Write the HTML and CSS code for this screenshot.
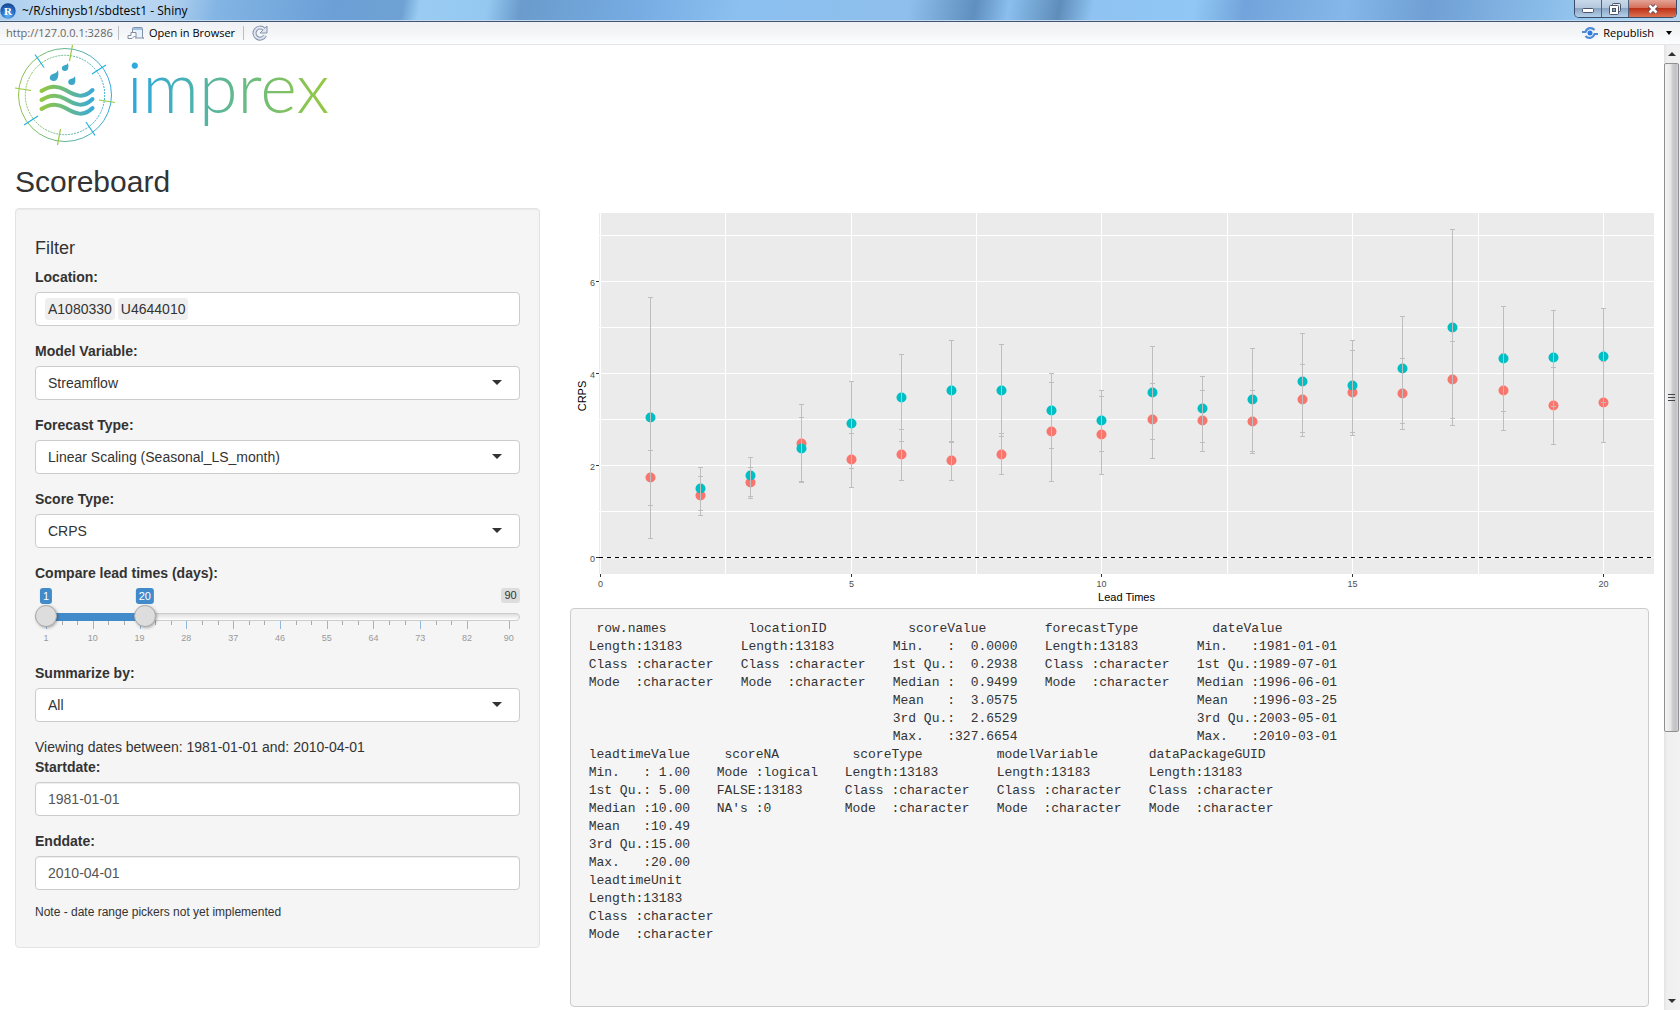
FILE: index.html
```html
<!DOCTYPE html>
<html lang="en">
<head>
<meta charset="utf-8">
<title>~/R/shinysb1/sbdtest1 - Shiny</title>
<link rel="stylesheet" href="styles.css">
</head>
<body>
<header class="titlebar">
  <svg class="app-icon" width="16" height="16" viewBox="0 0 16 16" aria-hidden="true">
    <defs><radialGradient id="ball" cx=".5" cy=".8" r=".8"><stop offset="0" stop-color="#5fb4f2"/><stop offset=".6" stop-color="#2468c0"/><stop offset="1" stop-color="#16408c"/></radialGradient></defs>
    <circle cx="8" cy="8" r="7.7" fill="url(#ball)"/>
    <text x="8" y="12" text-anchor="middle" class="app-letter">R</text>
  </svg>
  <span class="window-title">~/R/shinysb1/sbdtest1 - Shiny</span>
  <div class="window-buttons">
    <button class="win-btn" type="button" aria-label="Minimize"><svg width="14" height="14" viewBox="0 0 14 14"><rect x="1.5" y="6.500" width="11" height="4" rx="1" fill="#fff" stroke="#4a5568"/></svg></button>
    <button class="win-btn" type="button" aria-label="Restore"><svg width="14" height="14" viewBox="0 0 14 14"><rect x="4.500" y="1.500" width="8" height="8" rx="1" fill="#e8edf3" stroke="#4a5568"/><rect x="1.500" y="3.500" width="9" height="9" rx="1" fill="#fff" stroke="#4a5568"/><rect x="4.500" y="6.500" width="3" height="3" fill="#8fa3ba" stroke="#4a5568"/></svg></button>
    <button class="win-btn win-close" type="button" aria-label="Close"><svg width="14" height="14" viewBox="0 0 14 14"><path d="M3.500 3.500l7 7M10.500 3.500l-7 7" stroke="#5b4a55" stroke-width="4.500"/><path d="M3.500 3.500l7 7M10.500 3.500l-7 7" stroke="#fff" stroke-width="2.500"/></svg></button>
  </div>
</header>
<nav class="toolbar">
  <span class="url">http://127.0.0.1:3286</span>
  <span class="divider"></span>
  <button class="tool open" type="button">
    <svg width="18" height="14" viewBox="0 0 18 14" aria-hidden="true"><path d="M5.500 6V2.500a1 1 0 0 1 1-1h8a1 1 0 0 1 1 1v9a1 1 0 0 0 1.500.500H8" fill="#e9f1fa" stroke="#8292a8"/><path d="M6 3h9" stroke="#9fc0e2" stroke-width="2"/><path d="M1 12.500V9.500h3V6.500l5 0v5l-1.500-1.500L5 12.500z" fill="#fff" stroke="#7f8ea5"/></svg>
    <span>Open in Browser</span>
  </button>
  <span class="divider"></span>
  <button class="tool reload" type="button" aria-label="Reload">
    <svg width="16" height="16" viewBox="0 0 16 16"><path d="M13 10.500A5.500 5.500 0 1 1 12 4.300" fill="none" stroke="#8592aa" stroke-width="4"/><path d="M15 1v7H8z" fill="#dfe6f2" stroke="#8592aa"/><path d="M13 10.500A5.500 5.500 0 1 1 12 4.300" fill="none" stroke="#dfe6f2" stroke-width="2"/></svg>
  </button>
  <button class="tool republish" type="button">
    <svg width="18" height="14" viewBox="0 0 18 14" aria-hidden="true"><circle cx="9" cy="7" r="2.500" fill="#2f7be0"/><path d="M1 6h3.500C6 1.500 11 1 13.500 4M17 8h-3.500C12 12.500 7 13 4.500 10" fill="none" stroke="#4f8cd8" stroke-width="2.200"/></svg>
    <span>Republish</span>
    <span class="caret"></span>
  </button>
</nav>
<div class="viewport">
  <main class="page">
    <svg class="logo" width="320" height="100" viewBox="0 0 320 100" role="img" aria-label="imprex">
      <defs>
        <linearGradient id="ring" gradientUnits="userSpaceOnUse" x1="4" y1="0" x2="96" y2="0"><stop offset="0" stop-color="#8cc34b"/><stop offset="1" stop-color="#36a9dc"/></linearGradient>
        <linearGradient id="wave" gradientUnits="userSpaceOnUse" x1="25" y1="0" x2="80" y2="0"><stop offset="0" stop-color="#94c83d"/><stop offset="1" stop-color="#36a9dc"/></linearGradient>
        <linearGradient id="word" gradientUnits="userSpaceOnUse" x1="116" y1="0" x2="316" y2="0"><stop offset="0" stop-color="#2ca8e0"/><stop offset="1" stop-color="#97c93d"/></linearGradient>
      </defs>
      <circle cx="50" cy="50" r="46.500" fill="none" stroke="url(#ring)"/>
      <circle cx="50" cy="50" r="39.700" fill="none" stroke="url(#ring)" stroke-dasharray="2 1"/>
      <g stroke="#97c93d" stroke-width="1.200"><path d="M57.500 0l-3 16M0 43l16 2.500M84 55l16 2.500M45.500 84l-3 16"/></g>
      <g stroke="#1fb1e6" stroke-width="1.200"><path d="M20 9.500l9 13M91 20l-14 9M9 80l14-9M71 77l9 13.500"/></g>
      <g fill="none" stroke="url(#wave)" stroke-width="4" stroke-linecap="round"><path d="M26.500 46c6-4 14-7 24-1s18 9 27 0M26.500 55c6-4 14-7 24-1s18 9 27 0M26.500 64c6-4 14-7 24-1s18 9 27 0"/></g>
      <g fill="#3da6c9"><path d="M43 25c1 5 0 11-4 11-6 0-5-6-1-7 3-1 4-2 5-4z"/><path d="M53 18c1 5 0 8-3 8-4 0-4-5-1-5.500 2-.500 3-1 4-2.500z"/><path d="M60 31c1 6 0 9-3 9-5 0-4.500-5.500-1.500-6 2.500-.500 3.500-1 4.500-3z"/></g>
      <text class="wordmark" x="112" y="68" fill="url(#word)">imprex</text>
    </svg>
    <h2 class="heading">Scoreboard</h2>
    <div class="row">
      <section class="side">
        <form class="well">
          <h4 class="well-title">Filter</h4>
          <div class="field">
            <label for="location">Location:</label>
            <div class="control chips"><span class="chip">A1080330</span><span class="chip">U4644010</span><input class="chip-input" id="location" type="text"></div>
          </div>
          <div class="field">
            <label for="variable">Model Variable:</label>
            <div class="select"><select class="control" id="variable"><option>Streamflow</option></select></div>
          </div>
          <div class="field">
            <label for="forecast">Forecast Type:</label>
            <div class="select"><select class="control" id="forecast"><option>Linear Scaling (Seasonal_LS_month)</option></select></div>
          </div>
          <div class="field">
            <label for="score">Score Type:</label>
            <div class="select"><select class="control" id="score"><option>CRPS</option></select></div>
          </div>
          <div class="field">
            <label for="lead-from">Compare lead times (days):</label>
            <div class="slider">
              <div class="slider-track"></div>
              <div class="slider-scale" id="scale"></div>
              <output class="badge badge-max">90</output>
              <input type="range" id="lead-from" min="1" max="90" value="1">
              <input type="range" id="lead-to" aria-label="Lead time to" min="1" max="90" value="20">
            </div>
          </div>
          <div class="field">
            <label for="summarize">Summarize by:</label>
            <div class="select"><select class="control" id="summarize"><option>All</option></select></div>
          </div>
          <div class="dates-text">Viewing dates between: 1981-01-01 and: 2010-04-01</div>
          <div class="field">
            <label for="start">Startdate:</label>
            <input class="control date" id="start" type="text" value="1981-01-01">
          </div>
          <div class="field">
            <label for="end">Enddate:</label>
            <input class="control date" id="end" type="text" value="2010-04-01">
          </div>
          <p class="note">Note - date range pickers not yet implemented</p>
        </form>
      </section>
      <section class="content">
        <svg class="plot" id="plot" role="img" aria-label="CRPS by lead time"></svg>
        <div class="summary">
          <div class="block">
<pre> row.names
Length:13183
Class :character
Mode  :character</pre>
<pre> locationID
Length:13183
Class :character
Mode  :character</pre>
<pre>  scoreValue
Min.   :  0.0000
1st Qu.:  0.2938
Median :  0.9499
Mean   :  3.0575
3rd Qu.:  2.6529
Max.   :327.6654</pre>
<pre>forecastType
Length:13183
Class :character
Mode  :character</pre>
<pre>  dateValue
Min.   :1981-01-01
1st Qu.:1989-07-01
Median :1996-06-01
Mean   :1996-03-25
3rd Qu.:2003-05-01
Max.   :2010-03-01</pre>
          </div>
          <div class="block block-narrow">
<pre>leadtimeValue
Min.   : 1.00
1st Qu.: 5.00
Median :10.00
Mean   :10.49
3rd Qu.:15.00
Max.   :20.00</pre>
<pre> scoreNA
Mode :logical
FALSE:13183
NA's :0</pre>
<pre> scoreType
Length:13183
Class :character
Mode  :character</pre>
<pre>modelVariable
Length:13183
Class :character
Mode  :character</pre>
<pre>dataPackageGUID
Length:13183
Class :character
Mode  :character</pre>
          </div>
          <div class="block">
<pre>leadtimeUnit
Length:13183
Class :character
Mode  :character</pre>
          </div>
        </div>
      </section>
    </div>
  </main>
  <div class="scrollbar" aria-hidden="true">
    <span class="arrow arrow-up"></span>
    <div class="rail"><div class="thumb"><i></i><i></i><i></i></div></div>
    <span class="arrow arrow-down"></span>
  </div>
</div>
<script src="app.js"></script>
</body>
</html>
```

FILE: styles.css
```css
* { box-sizing: border-box; }

body {
  margin: 0;
  height: 100vh;
  display: flex;
  flex-direction: column;
  overflow: hidden;
  background: #fff;
  color: #333;
  font: 14px/20px "Liberation Sans", Arial, sans-serif;
}

button { font: inherit; color: inherit; border: 0; background: none; padding: 0; }

/* Window frame */
.titlebar {
  display: flex;
  align-items: center;
  height: 22px;
  flex: none;
  padding-right: 3px;
  border-bottom: 1px solid #40546e;
  box-shadow: inset 0 -1px #c3daf0;
  background: linear-gradient(100deg, #a9cdee 0, #c3dcf3 4%, #b4d3f0 10%, #82b4e4 13%, #6b9fd6 20%, #6fa2d3 24%, #9accf3 25%, #95c8f1 29%, #6a9bcc 31%, #76ace3 38%, #8bc0f0 44%, #8fbfec 54%, #5f8fbe 58%, #8abfee 60%, #5f8dba 63%, #8fc3f1 65%, #90c7f4 71%, #72a4db 74%, #85b7ea 80%, #6f9fd4 85%, #8fc1ec 93%, #a9d4f3 97%, #b9d8ef 100%);
  font: 12px/16px "Open Sans", "Noto Sans", sans-serif;
  color: #000;
}
.app-icon { display: block; flex: none; }
.app-letter { font: bold 11px "Liberation Serif", serif; fill: #fff; }
.window-title { margin-left: 6px; }
.window-buttons {
  display: flex;
  align-self: flex-start;
  margin-left: auto;
  height: 18px;
  border: 1px solid #3b4d66;
  border-top: 0;
  border-radius: 0 0 5px 5px;
  overflow: hidden;
}
.win-btn {
  display: flex;
  align-items: center;
  justify-content: center;
  width: 27px;
  border-right: 1px solid #4e627c;
  background: linear-gradient(#c9d9ea, #b4c8dd 45%, #8ba6c4 50%, #b3cfe8);
}
.win-close { width: 47px; border: 0; background: linear-gradient(#e4a496, #d5705c 45%, #bd3218 50%, #dd7252); }

.toolbar {
  display: flex;
  align-items: center;
  height: 23px;
  flex: none;
  padding: 0 8px 0 6px;
  border-bottom: 1px solid #e2e4e6;
  background: linear-gradient(#eff1f4, #f4f5f7 50%, #fdfefe);
  font: 12px/16px "Open Sans", "Noto Sans", sans-serif;
  color: #000;
}
.url { color: #666; font-size: 11px; width: 104px; white-space: nowrap; }
.divider { width: 1px; height: 14px; margin: 0 8px; background: #b9bec6; }
.tool { display: flex; align-items: center; font-size: 11px; }
.tool span { white-space: nowrap; }
.open { gap: 4px; }
.republish { margin-left: auto; gap: 4px; }
.caret { margin-left: 8px; border: 3px solid transparent; border-top: 4px solid #000; border-bottom: 0; }

/* Page */
.viewport { flex: 1; min-height: 0; display: flex; }
.page { flex: 1; min-width: 0; overflow: hidden; padding: 0 15px; }
.logo { display: block; }
.wordmark { font: 300 70px Lato, sans-serif; }
.heading { margin: 20px 0 10px; font-size: 30px; line-height: 33px; font-weight: 400; }

.row { display: grid; grid-template-columns: minmax(0, 1fr) minmax(0, 2fr); margin: 0 -15px; }
.side, .content { padding: 0 15px; }

.well {
  padding: 19px;
  border: 1px solid #e3e3e3;
  border-radius: 4px;
  background: #f5f5f5;
  box-shadow: inset 0 1px 1px rgba(0, 0, 0, .05);
}
.well-title { margin: 11px 0 9px; font-size: 18px; line-height: 19px; font-weight: 400; }
.field { margin-bottom: 15px; }
.field label { display: block; margin-bottom: 5px; font-weight: 700; }
.control {
  display: block;
  width: 100%;
  height: 34px;
  margin: 0;
  padding: 0 12px;
  border: 1px solid #ccc;
  border-radius: 4px;
  background: #fff;
  color: #333;
  font: inherit;
}
select.control { appearance: none; padding: 0 12px; }
.date { color: #555; box-shadow: inset 0 1px 1px rgba(0, 0, 0, .075); }
.chips { display: flex; align-items: center; gap: 3px; padding: 0 9px; }
.chip { padding: 1px 3px; border-radius: 3px; background: #efefef; }
.chip-input { flex: 1; min-width: 0; border: 0; padding: 0; outline: 0; background: none; font: inherit; }
.select { position: relative; }
.select::after {
  content: "";
  position: absolute;
  right: 18px;
  top: 14px;
  border: 5px solid transparent;
  border-top-color: #333;
  border-bottom: 0;
  pointer-events: none;
}

/* Two-handle range slider: marks and handles are placed along the track */
.slider { position: relative; height: 60px; padding-top: 25px; }
.slider-track {
  height: 8px;
  border: 1px solid #ccc;
  border-radius: 8px;
  background: linear-gradient(#dedede, #fff);
}
.slider-scale { position: absolute; top: 0; left: 11px; right: 11px; height: 60px; }
.slider-fill { position: absolute; top: 25px; height: 8px; background: #428bca; }
.badge {
  position: absolute;
  top: 0;
  padding: 0 3px;
  border-radius: 3px;
  background: #428bca;
  color: #fff;
  font-size: 11px;
  line-height: 16px;
  transform: translateX(-50%);
}
.badge-max { right: 0; transform: none; background: #ddd; color: #333; line-height: 15px; }
.tick { position: absolute; top: 33px; width: 1px; height: 4px; background: #aaa; }
.tick-major { height: 8px; background: #8fb8dd; }
.tick-label { position: absolute; top: 44px; transform: translateX(-50%); color: #999; font-size: 9px; line-height: 12px; }
.slider input {
  position: absolute;
  top: 17px;
  left: 0;
  width: 100%;
  height: 22px;
  margin: 0;
  appearance: none;
  background: none;
  pointer-events: none;
}
.slider input::-webkit-slider-thumb {
  appearance: none;
  width: 22px;
  height: 22px;
  border: 1px solid #aaa;
  border-radius: 50%;
  background: #ddd;
  box-shadow: 1px 1px 3px rgba(0, 0, 0, .3);
  pointer-events: auto;
}
.note { margin: 16px 0 9px; font-size: 12px; line-height: 13px; }

/* Plot and summary */
.plot { display: block; width: calc(100% + 10px); height: 400px; overflow: visible; font: 9px "Liberation Sans", Arial, sans-serif; }
.plot .panel { fill: #ebebeb; }
.plot line { shape-rendering: crispEdges; }
.grid { stroke: #fff; }
.whisker { stroke: #bebebe; }
.mark { stroke: #333; }
.zero { stroke: #000; stroke-dasharray: 4 4; }
.tick-text { fill: #4d4d4d; }
.axis-title { font-size: 11px; fill: #000; }

.summary {
  min-height: 399px;
  padding: 11px 18px;
  border: 1px solid #ccc;
  border-radius: 4px;
  background: #f5f5f5;
}
.block { display: grid; grid-template-columns: repeat(5, 152px); }
.block-narrow { grid-template-columns: 128px 128px 152px 152px 152px; }
.block pre { margin: 0; font: 13px/18px "Liberation Mono", "Courier New", monospace; }

/* Scrollbar */
.scrollbar {
  display: flex;
  flex-direction: column;
  flex: none;
  width: 16px;
  padding-right: 1px;
  background: linear-gradient(90deg, #e3e3e3, #efefef 20%, #f2f2f2);
}
.arrow { height: 18px; flex: none; display: flex; align-items: center; justify-content: center; }
.arrow::before { content: ""; border: 4px solid transparent; }
.arrow-up::before { border-top: 0; border-bottom-color: #333; }
.arrow-down::before { border-bottom: 0; border-top-color: #333; }
.rail { flex: 1; min-height: 0; }
.thumb {
  display: flex;
  flex-direction: column;
  align-items: center;
  justify-content: center;
  gap: 2px;
  height: 72%;
  border: 1px solid #8f8f8f;
  border-radius: 2px;
  background: linear-gradient(90deg, #f5f5f5, #e6e6e8 45%, #cfcfd2 55%, #c0c0c4 85%, #dadadc);
}
.thumb i { width: 7px; height: 1px; background: #444; }
```

FILE: app.js
```js
// Summary per lead time: [mean, low, high] for each location.
const red = [
  [1.73, 1.14, 2.33], [1.34, 0.92, 1.77], [1.64, 1.29, 1.96], [2.48, 1.62, 3.33], [2.13, 1.53, 2.70],
  [2.25, 1.68, 2.79], [2.10, 1.68, 2.51], [2.25, 1.81, 2.70], [2.75, 1.66, 3.81], [2.67, 1.81, 3.49],
  [2.99, 2.16, 3.79], [2.97, 2.31, 3.62], [2.95, 2.27, 3.62], [3.43, 2.62, 4.20], [3.58, 2.66, 4.51],
  [3.56, 2.79, 4.33], [3.88, 3.03, 4.70], [3.62, 2.77, 4.44], [3.30, 2.46, 4.12], [3.38, 2.51, 4.26]
];
const teal = [
  [3.04, 0.42, 5.66], [1.49, 1.03, 1.96], [1.78, 1.33, 2.18], [2.36, 1.65, 3.05], [2.91, 1.94, 3.83],
  [3.47, 2.53, 4.42], [3.64, 2.53, 4.72], [3.64, 2.64, 4.62], [3.19, 2.38, 3.99], [2.97, 2.31, 3.62],
  [3.58, 2.57, 4.59], [3.23, 2.51, 3.94], [3.43, 2.31, 4.55], [3.82, 2.72, 4.88], [3.73, 2.72, 4.72],
  [4.10, 2.92, 5.25], [5.01, 2.88, 7.14], [4.32, 3.18, 5.46], [4.34, 3.29, 5.38], [4.38, 3.36, 5.42]
];

const plot = document.getElementById('plot');

function drawPlot() {
  const width = Math.round(plot.getBoundingClientRect().width);
  const left = 29, right = width - 5, top = 5, bottom = 366;
  const step = (right - left - 2) / 21;
  const x = v => Math.round(left + 1 + v * step) + 0.5;
  const y = v => Math.round(349 - v * 46) + 0.5;
  const line = (cls, x1, y1, x2, y2) => `<line class="${cls}" x1="${x1}" y1="${y1}" x2="${x2}" y2="${y2}"/>`;
  const out = [`<rect class="panel" x="${left}" y="${top}" width="${right - left}" height="${bottom - top}"/>`];

  for (let v = 0; v <= 7; v++) out.push(line('grid', left, y(v), right, y(v)));
  for (let v = 0; v <= 20; v += 2.5) out.push(line('grid', x(v), top, x(v), bottom));
  for (let i = 0; i < 20; i++) {
    out.push(`<circle cx="${x(i + 1)}" cy="${y(red[i][0])}" r="5" fill="#f8766d"/>`);
    out.push(`<circle cx="${x(i + 1)}" cy="${y(teal[i][0])}" r="5" fill="#00bfc4"/>`);
  }
  for (const series of [red, teal]) series.forEach(([, low, high], i) => {
    const cx = x(i + 1);
    out.push(line('whisker', cx, y(low), cx, y(high)));
    for (const v of [low, high]) out.push(line('whisker', cx - 2.5, y(v), cx + 2.5, y(v)));
  });
  out.push(line('zero', left, y(0), right, y(0)));
  for (const v of [0, 2, 4, 6]) {
    out.push(line('mark', left - 3, y(v), left, y(v)));
    out.push(`<text class="tick-text" text-anchor="end" x="${left - 4}" y="${y(v) + 4}">${v}</text>`);
  }
  for (const v of [0, 5, 10, 15, 20]) {
    out.push(line('mark', x(v), bottom, x(v), bottom + 3));
    out.push(`<text class="tick-text" text-anchor="middle" x="${x(v)}" y="${bottom + 13}">${v}</text>`);
  }
  const mid = (left + right) / 2;
  out.push(`<text class="axis-title" text-anchor="middle" x="${mid}" y="393">Lead Times</text>`);
  out.push(`<text class="axis-title" text-anchor="middle" transform="translate(16 188) rotate(-90)">CRPS</text>`);
  plot.innerHTML = out.join('');
}

const scale = document.getElementById('scale');
const from = document.getElementById('lead-from');
const to = document.getElementById('lead-to');
const percent = v => (v - 1) / 89 * 100;

function drawScale() {
  const a = Math.min(+from.value, +to.value), b = Math.max(+from.value, +to.value);
  const marks = [1, 10, 19, 28, 37, 46, 55, 64, 73, 82, 90];
  let out = `<div class="slider-fill" style="left:${percent(a)}%;width:${percent(b) - percent(a)}%"></div>`;
  for (const m of marks) {
    out += `<span class="tick tick-major" style="left:${percent(m)}%"></span><span class="tick-label" style="left:${percent(m)}%">${m}</span>`;
    if (m < 82) for (const d of [3, 6]) out += `<span class="tick" style="left:${percent(m + d)}%"></span>`;
  }
  for (const v of [a, b]) out += `<output class="badge" style="left:${percent(v)}%">${v}</output>`;
  scale.innerHTML = out;
}

from.addEventListener('input', drawScale);
to.addEventListener('input', drawScale);
window.addEventListener('resize', drawPlot);
drawScale();
drawPlot();
```
